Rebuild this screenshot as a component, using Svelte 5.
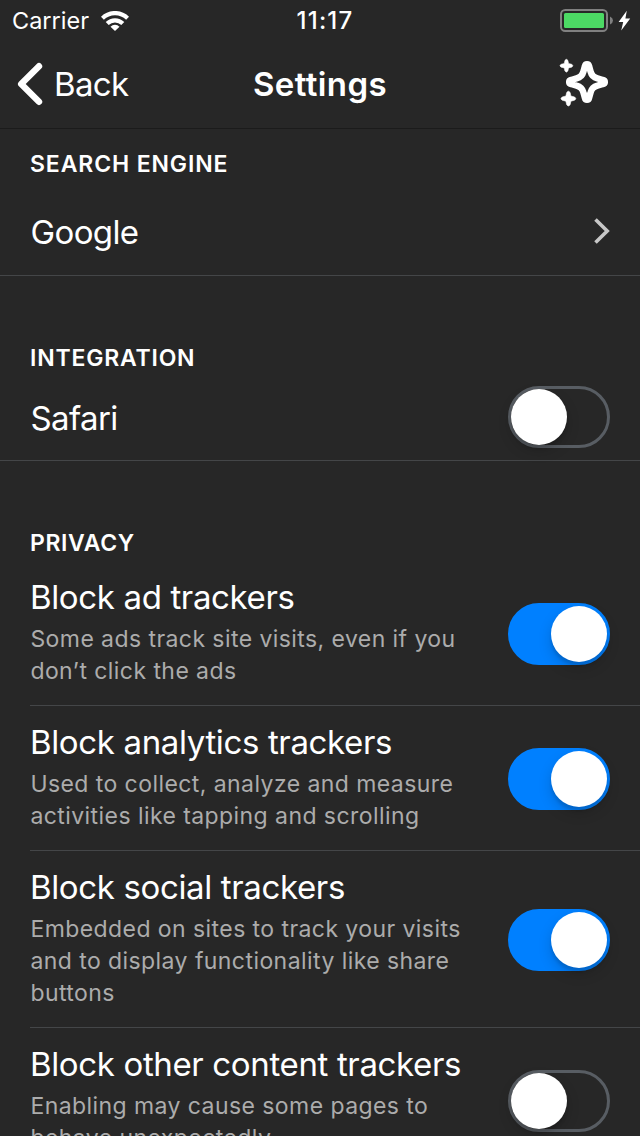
<script>
  let integration = $state(false);
  let trackers = $state([
    { title: 'Block ad trackers', detail: 'Some ads track site visits, even if you don’t click the ads', on: true },
    { title: 'Block analytics trackers', detail: 'Used to collect, analyze and measure activities like tapping and scrolling', on: true },
    { title: 'Block social trackers', detail: 'Embedded on sites to track your visits and to display functionality like share buttons', on: true },
    { title: 'Block other content trackers', detail: 'Enabling may cause some pages to behave unexpectedly', on: false }
  ]);
</script>

{#snippet toggle(on, label, flip)}
  <button class="switch" class:on role="switch" aria-checked={on} aria-label={label} onclick={flip}>
    <span class="knob"></span>
  </button>
{/snippet}

<div class="screen">
  <div class="status">
    <div class="carrier">
      <span>Carrier</span>
      <svg width="28" height="20" viewBox="0 0 28 20">
        <g fill="none" stroke="#fff" stroke-width="4.2">
          <path d="M1.4 7.2A18 18 0 0 1 26.6 7.2" />
          <path d="M6.2 12.6A11 11 0 0 1 21.8 12.6" />
        </g>
        <path d="M14 20L9.5 15.7A6.4 6.4 0 0 1 18.5 15.7Z" fill="#fff" />
      </svg>
    </div>
    <span class="time">11:17</span>
    <div class="power">
      <svg width="72" height="24" viewBox="0 0 72 24">
        <rect x="1" y="1" width="46" height="21" rx="4.2" fill="none" stroke="#808080" stroke-width="2" />
        <rect x="4" y="4" width="40" height="15" rx="1.5" fill="#4cd964" />
        <path d="M50 7.5Q53 9 53 11.5T50 15.5Z" fill="#808080" />
        <path d="M66.8 1.8L58.6 12.9H63.2L61.2 21.4L70.2 9.6H65.4Z" fill="#fff" />
      </svg>
    </div>
  </div>

  <header>
    <div class="back">
      <svg width="26" height="44" viewBox="0 0 26 44">
        <path d="M22 4.2L4.2 22L22 39.8" fill="none" stroke="#fff" stroke-width="6.4" stroke-linecap="round" stroke-linejoin="round" />
      </svg>
      <span>Back</span>
    </div>
    <h1>Settings</h1>
    <div class="sparkle">
      <svg width="50" height="50" viewBox="559 58 50 50">
        <g transform="translate(587 82)">
          <path d="M-2 -16C-1.5 -18.4 1.5 -18.4 2 -16L3.6 -10.4Q5 -5 10.4 -3.6L16 -2C18.4 -1.5 18.4 1.5 16 2L10.4 3.6Q5 5 3.6 10.4L2 16C1.5 18.4 -1.5 18.4 -2 16L-3.6 10.4Q-5 5 -10.4 3.6L-16 2C-18.4 1.5 -18.4 -1.5 -16 -2L-10.4 -3.6Q-5 -5 -3.6 -10.4Z" fill="none" stroke="#fff" stroke-width="6.5" stroke-linejoin="round" />
        </g>
        <g fill="#fff" stroke="#fff" stroke-width="0.5">
          <path transform="translate(566.4 65.7)" d="M-1.5 -5.3Q0 -7.6 1.5 -5.3L2.2 -2.2L5.3 -1.5Q7.6 0 5.3 1.5L2.2 2.2L1.5 5.3Q0 7.6 -1.5 5.3L-2.2 2.2L-5.3 1.5Q-7.6 0 -5.3 -1.5L-2.2 -2.2Z" />
          <path transform="translate(568.4 98.6) scale(1.15)" d="M-1.5 -5.3Q0 -7.6 1.5 -5.3L2.2 -2.2L5.3 -1.5Q7.6 0 5.3 1.5L2.2 2.2L1.5 5.3Q0 7.6 -1.5 5.3L-2.2 2.2L-5.3 1.5Q-7.6 0 -5.3 -1.5L-2.2 -2.2Z" />
        </g>
      </svg>
    </div>
  </header>

  <main>
    <section class="engine">
      <h2>SEARCH ENGINE</h2>
      <div class="row">
        <span class="name">Google</span>
        <svg width="18" height="28" viewBox="0 0 18 28">
          <path d="M3.5 1.5L15.2 13L3.5 24.5" fill="none" stroke="#c7c7c7" stroke-width="3.6" />
        </svg>
      </div>
    </section>

    <section class="integration">
      <h2>INTEGRATION</h2>
      <div class="row">
        <span class="name">Safari</span>
        {@render toggle(integration, 'Safari', () => (integration = !integration))}
      </div>
    </section>

    <section class="privacy">
      <h2>PRIVACY</h2>
      <ul>
        {#each trackers as item}
          <li>
            <div class="copy">
              <h3>{item.title}</h3>
              <p>{item.detail}</p>
            </div>
            {@render toggle(item.on, item.title, () => (item.on = !item.on))}
          </li>
        {/each}
      </ul>
    </section>
  </main>
</div>

<style>
  :global(body) { background: #272727; overflow: hidden; }
  .screen {
    width: 640px;
    height: 1136px;
    overflow: hidden;
    background: #272727;
    color: #fff;
    font-family: Inter, "Liberation Sans", sans-serif;
  }
  svg { display: block; flex: none; }
  h1, h2, h3, p, ul { margin: 0; padding: 0; }
  .status {
    height: 40px;
    display: grid;
    grid-template-columns: 1fr auto 1fr;
    align-items: center;
    padding: 0 8px 0 12px;
    box-sizing: border-box;
    font-size: 23.5px;
    line-height: 40px;
  }
  .carrier { display: flex; align-items: center; gap: 12px; }
  .carrier span, .time { padding-top: 1px; }
  .time { font-weight: 500; font-size: 24px; letter-spacing: 1.2px; padding-left: 6px; }
  .power { justify-self: end; padding-top: 1px; }
  header {
    height: 89px;
    box-sizing: border-box;
    border-bottom: 1px solid #1b1b1b;
    display: grid;
    grid-template-columns: 1fr auto 1fr;
    align-items: center;
    padding: 0 31px 0 17px;
    font-size: 33px;
  }
  .back { display: flex; align-items: center; gap: 11px; letter-spacing: -0.65px; }
  h1 { font-size: 33px; font-weight: 560; letter-spacing: 0.4px; padding-left: 14px; }
  .sparkle { justify-self: end; margin-bottom: 2px; }
  h2 {
    font-size: 23px;
    line-height: 32px;
    font-weight: 560;
    letter-spacing: 0.88px;
    padding: 0 30px;
  }
  .engine { padding-top: 19px; }
  .integration, .privacy { padding-top: 66px; }
  .integration h2 { letter-spacing: 0.8px; }
  .row {
    height: 87px;
    box-sizing: border-box;
    border-bottom: 1px solid #444648;
    display: flex;
    align-items: center;
    justify-content: space-between;
    padding: 0 30px;
  }
  .engine .row { height: 88px; margin-top: 8px; }
  .name { font-size: 33px; letter-spacing: -0.65px; line-height: 40px; padding: 1px 0 0 0.6px; }
  .privacy h2 { letter-spacing: 0.62px; }
  ul { list-style: none; margin: 2px 0 0 30px; }
  li {
    display: flex;
    align-items: center;
    justify-content: space-between;
    padding-right: 30px;
    border-bottom: 1px solid #444648;
  }
  li .switch { margin-top: 2px; }
  .copy { width: 450px; padding: 16px 0 18px; }
  h3 {
    font-size: 33px;
    line-height: 40px;
    font-weight: 400;
    letter-spacing: -0.36px;
    white-space: nowrap;
  }
  p {
    margin-top: 6px;
    font-size: 23px;
    line-height: 32px;
    letter-spacing: 0.43px;
    color: #acacac;
    padding-left: 0.4px;
  }
  .switch {
    width: 102px;
    height: 62px;
    flex: none;
    box-sizing: border-box;
    border: 3px solid #585d63;
    border-radius: 31px;
    background: transparent;
    padding: 0;
    display: flex;
  }
  .switch.on { background: #0080ff; border-color: #0080ff; justify-content: flex-end; }
  .knob {
    width: 56px;
    height: 56px;
    border-radius: 50%;
    background: #fff;
    box-shadow: 0 6px 14px rgba(0, 0, 0, 0.16), 0 4px 3px rgba(0, 0, 0, 0.1);
  }
</style>
